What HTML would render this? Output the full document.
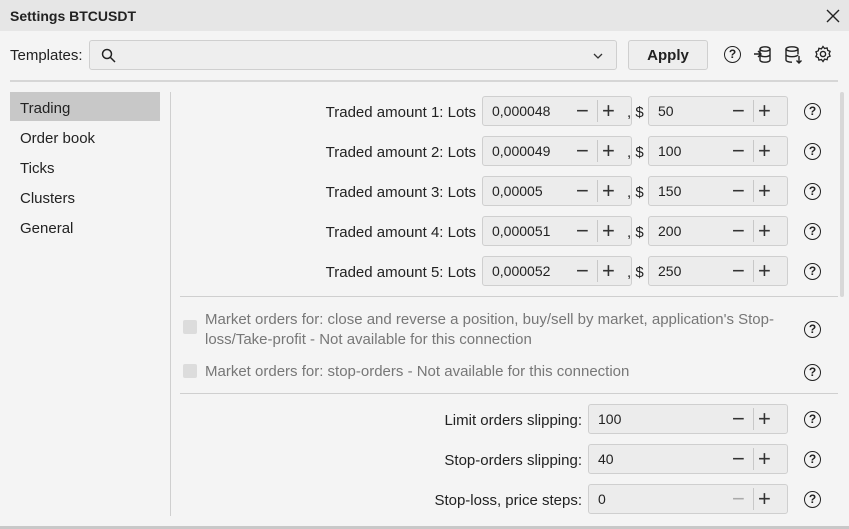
<!DOCTYPE html>
<html><head><style>
*{box-sizing:border-box;margin:0;padding:0}
body{width:849px;height:529px;background:#f4f4f4;font-family:"Liberation Sans",sans-serif;font-size:15px;color:#222;position:relative;overflow:hidden}
.a{position:absolute}
.title{left:0;top:0;width:849px;height:31px;background:#e6e6e6}
.inp{position:absolute;height:30px;background:#ececec;border:1px solid #cfcfcf;border-radius:3px}
.inp span.v{position:absolute;left:9px;top:6px;font-size:14px}
.mi{position:absolute;top:3px;font-size:22px;line-height:22px;color:#333}
.dv{position:absolute;top:3px;width:1px;height:22px;background:#c8c8c8}
.lbl{position:absolute;text-align:right;font-size:15px;line-height:18px}
.q{position:absolute;width:17px;height:17px;border:1.5px solid #222;border-radius:50%;font-size:12px;font-weight:bold;text-align:center;line-height:14px}
.hl{position:absolute;height:2px;background:#d6d6d6}
</style></head><body>
<div class="a title"></div>
<div class="a" style="left:10px;top:8px;font-size:14px;font-weight:bold">Settings BTCUSDT</div>
<svg class="a" style="left:826px;top:9px" width="14" height="14"><path d="M1 1L13 13M13 1L1 13" stroke="#222" stroke-width="1.4"/></svg>
<div class="a" style="left:10px;top:47px">Templates:</div>
<div class="inp" style="left:89px;top:40px;width:528px;background:#eeeeee">
<svg class="a" style="left:11px;top:7px" width="16" height="16"><circle cx="6" cy="6" r="4.5" fill="none" stroke="#222" stroke-width="1.5"/><line x1="9.5" y1="9.5" x2="14" y2="14" stroke="#222" stroke-width="1.5"/></svg>
<svg class="a" style="left:503px;top:11px" width="10" height="8"><polyline points="1,2 5,6 9,2" fill="none" stroke="#333" stroke-width="1.3"/></svg>
</div>
<div class="inp" style="left:628px;top:40px;width:80px;text-align:center;line-height:30px;font-size:15px;font-weight:bold;background:#eeeeee">Apply</div>
<div class="q" style="left:724px;top:46px">?</div>
<svg class="a" style="left:753px;top:45px" width="20" height="20"><ellipse cx="12" cy="4" rx="5" ry="2.2" fill="none" stroke="#222" stroke-width="1.4"/><path d="M7 4v11c0 1.2 2.2 2.2 5 2.2s5-1 5-2.2V4M7 9.5c0 1.2 2.2 2.2 5 2.2s5-1 5-2.2" fill="none" stroke="#222" stroke-width="1.4"/><path d="M1 9h7M5 6l3 3-3 3" fill="none" stroke="#222" stroke-width="1.4"/></svg>
<svg class="a" style="left:784px;top:45px" width="20" height="20"><ellipse cx="8" cy="4" rx="6" ry="2.2" fill="none" stroke="#222" stroke-width="1.4"/><path d="M2 4v11c0 1.2 2.5 2.2 6 2.2M14 4v5M2 9.5c0 1.2 2.5 2.2 6 2.2s6-1 6-2.2M15 11v7M12.5 15.5l2.5 2.5 2.5-2.5" fill="none" stroke="#222" stroke-width="1.4"/></svg>
<svg class="a" style="left:814px;top:45px" width="18" height="18"><circle cx="9" cy="9" r="2.6" fill="none" stroke="#222" stroke-width="1.4"/><path d="M9 1.5l1.6 2 2.5-.6.6 2.5 2.4 1-1 2.4 1 2.4-2.4 1-.6 2.5-2.5-.6L9 16.5l-1.6-2-2.5.6-.6-2.5-2.4-1 1-2.4-1-2.4 2.4-1 .6-2.5 2.5.6z" fill="none" stroke="#222" stroke-width="1.3"/></svg>
<div class="hl" style="left:10px;top:80px;width:828px"></div>
<div class="a" style="left:10px;top:92px;width:150px;height:29px;background:#c8c8c8"></div>
<div class="a" style="left:20px;top:100px">Trading</div>
<div class="a" style="left:20px;top:130px">Order book</div>
<div class="a" style="left:20px;top:160px">Ticks</div>
<div class="a" style="left:20px;top:190px">Clusters</div>
<div class="a" style="left:20px;top:220px">General</div>
<div class="a" style="left:170px;top:92px;width:1px;height:424px;background:#cfcfcf"></div>
<div class="a" style="left:840px;top:92px;width:4px;height:205px;background:#d8d8d8;border-radius:2px"></div>

<div id="rows"></div>
<script>
var h='';
var L=['0,000048','0,000049','0,00005','0,000051','0,000052'],D=['50','100','150','200','250'];
function spin(x,w,y,val,dis){return '<div class="inp" style="left:'+x+'px;top:'+y+'px;width:'+w+'px"><span class="v">'+val+'</span><span class="mi" style="left:'+(w-57)+'px;color:'+(dis?'#aaa':'#333')+'">−</span><div class="dv" style="left:'+(w-36)+'px"></div><span class="mi" style="left:'+(w-31)+'px">+</span></div>';}
for(var i=0;i<5;i++){var y=96+i*40;
h+='<div class="lbl" style="left:250px;width:226px;top:'+(y+8)+'px">Traded amount '+(i+1)+': Lots</div>';
h+=spin(482,150,y,L[i]);
h+='<div class="a" style="left:627px;top:'+(y+8)+'px;line-height:18px">, $</div>';
h+=spin(648,140,y,D[i]);
h+='<div class="q" style="left:804px;top:'+(y+7)+'px">?</div>';}
var R=[['Limit orders slipping:','100',0],['Stop-orders slipping:','40',0],['Stop-loss, price steps:','0',1]];
for(var i=0;i<3;i++){var y=404+i*40;
h+='<div class="lbl" style="left:300px;width:282px;top:'+(y+8)+'px">'+R[i][0]+'</div>';
h+=spin(588,200,y,R[i][1],R[i][2]);
h+='<div class="q" style="left:804px;top:'+(y+7)+'px">?</div>';}
document.getElementById('rows').innerHTML=h;
</script>
<div class="hl" style="left:180px;top:296px;width:658px;height:1px;background:#cfcfcf"></div>
<div class="a" style="left:183px;top:320px;width:14px;height:14px;background:#dcdcdc;border-radius:2px"></div>
<div class="a" style="left:205px;top:310px;width:580px;color:#777;line-height:20px">Market orders for: close and reverse a position, buy/sell by market, application's Stop-loss/Take-profit - Not available for this connection</div>
<div class="q" style="left:804px;top:321px">?</div>
<div class="a" style="left:183px;top:364px;width:14px;height:14px;background:#dcdcdc;border-radius:2px"></div>
<div class="a" style="left:205px;top:363px;color:#777">Market orders for: stop-orders - Not available for this connection</div>
<div class="q" style="left:804px;top:364px">?</div>
<div class="hl" style="left:180px;top:393px;width:658px;height:1px;background:#cfcfcf"></div>
<div class="a" style="left:0;top:526px;width:849px;height:3px;background:#c8c8c8"></div>
</body></html>
